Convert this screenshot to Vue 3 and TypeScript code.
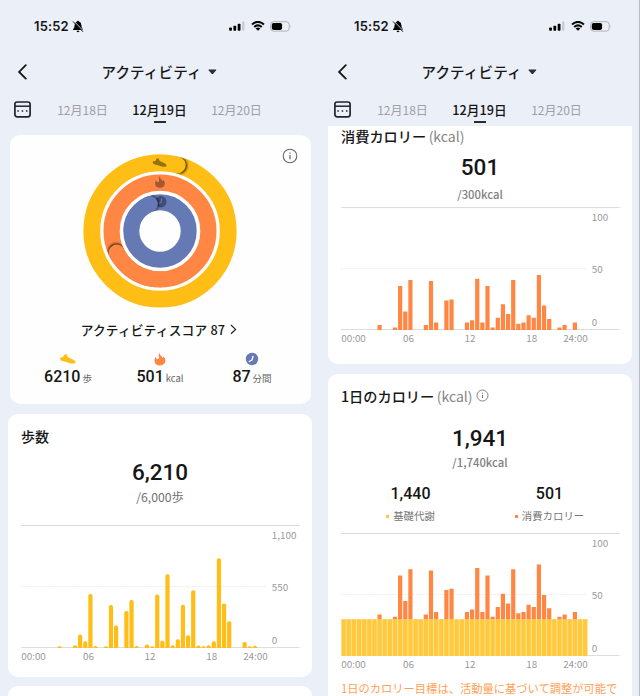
<script setup lang="ts">
import { defineComponent, h } from 'vue'

type Series = Record<number, number>

interface Bar { x: number; y: number; h: number; color: string; r: number }
interface Ring { id: string; r: number; w: number; color: string; end: number }

const SLOT = 5.14
const BASE = 122.9
const FULL = 122

const steps: Series = {
  7: 14, 10: 24, 11: 120, 12: 60, 13: 487, 14: 17, 16: 15, 17: 386, 18: 202, 20: 332, 21: 432,
  22: 17, 24: 30, 25: 15, 26: 482, 27: 64, 28: 664, 29: 24, 30: 78, 31: 388, 32: 115, 33: 520,
  34: 22, 35: 15, 36: 24, 37: 60, 38: 808, 39: 400, 40: 241, 43: 54, 44: 14, 45: 20,
}
const kcal: Series = {
  7: 4, 10: 2, 11: 36, 12: 15, 13: 41, 16: 4, 17: 40, 18: 6, 20: 24, 21: 25, 24: 6, 25: 8, 26: 42,
  27: 6, 28: 36, 29: 2, 30: 10, 31: 21, 32: 13, 33: 41, 34: 5, 35: 6, 36: 12, 37: 10, 38: 45,
  39: 20, 40: 9, 42: 2, 43: 4, 45: 6,
}

function toBars(data: Series, max: number, color: string, r: number, from = 0): Bar[] {
  return Object.entries(data).map(([slot, value]) => {
    const height = (value / max) * FULL
    return { x: 0.5 + Number(slot) * SLOT, y: BASE - from - height, h: height, color, r }
  })
}

const baseHeight = 0.3 * FULL
const baseBars: Bar[] = Array.from({ length: 48 }, (_, i) => ({
  x: 0.5 + i * SLOT, y: BASE - baseHeight, h: baseHeight, color: '#ffc93e', r: 0,
}))

const stepBars = toBars(steps, 1100, '#ffbd16', 1.8)
const kcalBars = toBars(kcal, 100, '#ff8743', 0)
const dayBars = [...baseBars, ...toBars(kcal, 100, '#ff8743', 0, baseHeight)]

const xTicks = [
  { x: 0.2, t: '00:00', a: 'start' }, { x: 67.6, t: '06', a: 'middle' },
  { x: 129.1, t: '12', a: 'middle' }, { x: 190.8, t: '18', a: 'middle' },
  { x: 246.8, t: '24:00', a: 'end' },
]

const BarChart = defineComponent({
  props: {
    bars: { type: Array as () => Bar[], required: true },
    labels: { type: Array as () => string[], required: true },
    filled: Boolean,
  },
  setup(p) {
    return () => h('svg', { class: 'chart', width: 279, height: 140, viewBox: '0 0 279 140' }, [
      h('rect', { x: 0, y: 0, width: 278.6, height: 1.1, fill: '#dcdcdc' }),
      h('line', { x1: 0, x2: 246, y1: 61.6, y2: 61.6, stroke: '#eeeeee', 'stroke-width': 1, 'stroke-dasharray': '2 1' }),
      h('rect', { x: 0, y: 122, width: 278.6, height: 1, fill: '#dddddd' }),
      p.filled ? h('rect', { x: 0.5, y: BASE - baseHeight, width: 246, height: baseHeight, fill: '#ffe39b' }) : null,
      ...p.bars.map(b => {
        const r = Math.min(b.r, b.h)
        return h('path', {
          fill: b.color,
          d: `M${b.x} ${b.y + b.h}V${b.y + r}q0 ${-r} ${r} ${-r}h${4.2 - 2 * r}q${r} 0 ${r} ${r}V${b.y + b.h}Z`,
        })
      }),
      ...p.labels.map((t, i) => h('text', { x: 250.8, y: [13.8, 66.3, 118.8][i] }, t)),
      ...xTicks.map(k => h('text', { x: k.x, y: 135, 'text-anchor': k.a }, k.t)),
    ])
  },
})

const rings: Ring[] = [
  { id: 'steps', r: 68.2, w: 16.8, color: '#ffbe16', end: 14.7 },
  { id: 'kcal', r: 48.4, w: 16.2, color: '#ff8743', end: 243.4 },
  { id: 'time', r: 28.7, w: 16, color: '#657ab5', end: 339.5 },
]

function point(r: number, deg: number): [number, number] {
  const a = (deg * Math.PI) / 180
  return [80 + r * Math.sin(a), 80 - r * Math.cos(a)]
}
function tail(ring: Ring): string {
  const [x1, y1] = point(ring.r, ring.end - 65)
  const [x2, y2] = point(ring.r, ring.end)
  return `M${x1} ${y1}A${ring.r} ${ring.r} 0 0 1 ${x2} ${y2}`
}

const shoe = 'M.7 3.1Q1.6 3.8 2.8 3.1Q4 2.3 4.2.8L6.4.2Q7 .3 7.1 1.2L7.6 3L13.9 6.1Q15.4 7 15.5 8.4Q15.5 9.5 14 9.5H11.2L1.1 6.6Q0 5.6.2 4.2Z'
const flame = 'M4.8 0Q5.2 2.1 7.5 4.1Q8 4.7 8 5.6Q8.9 5.3 9.1 4.1Q11.2 5.8 11.1 8.1Q10.8 12.8 5.6 13Q.6 12.8.2 8.4Q.1 6.3 1.3 4.6Q1.9 6.7 3.6 6.8Q5 6.7 4.6 4.2Q4.2 2 4.8 0Z'
const dates = ['12月18日', '12月19日', '12月20日']
</script>

<template>
  <main class="screens">
    <section v-for="side in ['left', 'right']" :key="side" class="phone" :class="side">
      <header class="top">
        <div class="status">
          <span class="time">15:52</span>
          <svg class="bell" width="12" height="13" viewBox="0 0 12 13">
            <path d="M6 .7Q7 .7 7 1.6Q9.4 2.3 9.4 5.4Q9.4 7.6 11 9.2V10H1V9.2Q2.6 7.6 2.6 5.4Q2.6 2.3 5 1.6Q5 .7 6 .7ZM4.5 10.8H7.5Q7.3 12.2 6 12.2T4.5 10.8Z" />
            <path d="M1.7 1L11.4 11" stroke="#ecf0f8" stroke-width="1" />
            <path d="M1 1.5L11 11.8" stroke="#111" stroke-width="1" />
          </svg>
          <svg class="signal" width="16" height="10" viewBox="0 0 16 10">
            <rect x=".2" y="6.5" width="2.7" height="3.3" rx=".7" />
            <rect x="4.4" y="4.8" width="2.8" height="5" rx=".7" />
            <rect x="8.7" y="2.7" width="2.8" height="7.1" rx=".7" />
            <rect x="13" y=".4" width="2.5" height="9.4" rx=".7" fill="#c9ccd2" />
          </svg>
          <svg class="wifi" width="14" height="10" viewBox="0 0 14 10" fill="none" stroke="#080808" stroke-width="2">
            <path d="M1 3.4Q7-1.6 13 3.4M3.2 5.9Q7 2.8 10.8 5.9" />
            <path d="M4.6 7.5Q7 5.7 9.4 7.5L7 9.8Z" fill="#080808" stroke="none" />
          </svg>
          <svg class="battery" width="22" height="11" viewBox="0 0 22 11">
            <rect x=".6" y=".7" width="18.6" height="9.4" rx="3" fill="none" stroke="#a9acb2" stroke-width=".9" />
            <rect x="1.8" y="1.9" width="10.3" height="7" rx="1.8" />
            <path d="M20.5 3.8Q22 5.4 20.5 7Z" fill="#a9acb2" />
          </svg>
        </div>
        <div class="nav">
          <svg class="back" width="10" height="16" viewBox="0 0 10 16" fill="none" stroke="#151515" stroke-width="1.8" stroke-linecap="round">
            <path d="M8.8 1.2L2.1 7.9L8.8 14.6" />
          </svg>
          <h1>アクティビティ</h1>
          <svg class="caret" width="9" height="6" viewBox="0 0 9 6"><path d="M1.1.4H7.7Q8.7.5 8.1 1.3L5.2 4.7Q4.4 5.5 3.6 4.7L.7 1.3Q.1.5 1.1.4Z" fill="#2b2d3b" /></svg>
        </div>
        <div class="days">
          <svg class="calendar" width="18" height="18" viewBox="0 0 18 18" fill="none" stroke="#20242c">
            <rect x=".9" y="1" width="15.2" height="14.8" rx="2.3" stroke-width="1.7" />
            <path d="M1 5.2H16" stroke-width="1.5" />
            <path d="M3.4 10H4.9M7.7 10H9.2M12 10H13.5" stroke-width="1.5" />
          </svg>
          <span v-for="(d, i) in dates" :key="d" class="day" :class="{ current: i === 1 }">{{ d }}</span>
        </div>
      </header>

      <div v-if="side === 'left'" class="body">
        <article class="card score">
          <svg class="info big" width="16" height="16" viewBox="0 0 16 16" fill="none" stroke="#666">
            <circle cx="8" cy="8" r="6.8" stroke-width="1.1" /><path d="M8 7V11.2M8 4.5V5.7" stroke-width="1.2" />
          </svg>
          <svg class="rings" width="160" height="160" viewBox="0 0 160 160">
            <defs>
              <filter id="soft" x="-50%" y="-50%" width="200%" height="200%"><feGaussianBlur stdDeviation="1.1" /></filter>
              <mask v-for="r in rings" :id="'m-' + r.id" :key="r.id" maskUnits="userSpaceOnUse" x="0" y="0" width="160" height="160">
                <circle cx="80" cy="80" :r="r.r" :stroke-width="r.w" fill="none" stroke="#fff" />
              </mask>
            </defs>
            <circle v-for="r in rings" :key="r.id" cx="80" cy="80" :r="r.r" :stroke-width="r.w" :stroke="r.color" fill="none" />
            <path :d="flame" transform="translate(74.9 25.1) scale(.9)" fill="#a5582d" />
            <circle cx="80.8" cy="50.7" r="5.7" fill="#3f4d76" />
            <path d="M81.6 47.4L81.2 51.2L78.6 52.8" fill="none" stroke="#657ab5" stroke-width="1.2" />
            <g v-for="r in rings" :key="'t' + r.id" :mask="`url(#m-${r.id})`">
              <circle :cx="point(r.r, r.end + 1.2)[0]" :cy="point(r.r, r.end + 1.2)[1]" :r="r.w / 2 + .3" fill="#000" fill-opacity=".7" filter="url(#soft)" />
              <path :d="tail(r)" :stroke="r.color" :stroke-width="r.w" stroke-linecap="round" fill="none" />
            </g>
            <path :d="shoe" transform="translate(72.6 7.1) scale(.9)" fill="#96720f" />
          </svg>
          <div class="score-line">
            アクティビティスコア 87
            <svg width="7" height="11" viewBox="0 0 7 11" fill="none" stroke="#222" stroke-width="1.2"><path d="M1 1L5.6 5.4L1 9.8" /></svg>
          </div>
          <div class="metrics">
            <div class="metric">
              <svg width="16" height="14" viewBox="0 0 16 14"><path :d="shoe" transform="translate(0 2)" fill="#ffbe16" /></svg>
              <p><b>6210</b><small>歩</small></p>
            </div>
            <div class="metric">
              <svg width="12" height="14" viewBox="0 0 12 14"><path :d="flame" transform="translate(.3 .5)" fill="#ff8743" /></svg>
              <p><b>501</b><small>kcal</small></p>
            </div>
            <div class="metric">
              <svg width="14" height="14" viewBox="0 0 14 14"><circle cx="7" cy="7" r="6.2" fill="#657ab5" /><path d="M8 3.8L7.2 7.9L3.8 9.8" fill="none" stroke="#fff" stroke-width="1.3" /></svg>
              <p><b>87</b><small>分間</small></p>
            </div>
          </div>
        </article>
        <article class="card steps">
          <h2>歩数</h2>
          <p class="total">6,210</p>
          <p class="goal regular">/6,000歩</p>
          <BarChart :bars="stepBars" :labels="['1,100', '550', '0']" />
        </article>
        <article class="card next"></article>
      </div>

      <div v-else class="body">
        <article class="card burned">
          <h2>消費カロリー<span>(kcal)</span></h2>
          <p class="total">501</p>
          <p class="goal">/300kcal</p>
          <BarChart :bars="kcalBars" :labels="['100', '50', '0']" />
        </article>
        <article class="card daily">
          <h2>1日のカロリー<span>(kcal)</span>
            <svg class="info" width="13" height="13" viewBox="0 0 13 13" fill="none" stroke="#777">
              <circle cx="6.5" cy="6.5" r="5.5" stroke-width=".9" /><path d="M6.5 5.7V9M6.5 3.7V4.7" />
            </svg>
          </h2>
          <p class="total">1,941</p>
          <p class="goal">/1,740kcal</p>
          <div class="split">
            <div><b>1,440</b><p class="legend base">基礎代謝</p></div>
            <div><b>501</b><p class="legend active">消費カロリー</p></div>
          </div>
          <BarChart :bars="dayBars" :labels="['100', '50', '0']" filled />
          <p class="note">1日のカロリー目標は、活動量に基づいて調整が可能で</p>
        </article>
      </div>
    </section>
  </main>
</template>

<style>
body { margin: 0; overflow: hidden; }
</style>

<style scoped>
* { box-sizing: border-box; }
h1, h2, p { margin: 0; }
svg { display: block; flex: none; }
.screens {
  display: flex; width: 640px; height: 696px; overflow: hidden; color: #161616;
  font-family: "Noto Sans CJK JP", "Noto Sans", sans-serif;
}
.phone { width: 320px; height: 696px; overflow: hidden; background: #ebeff8; display: flex; flex-direction: column; }
.right { background: #ebf0f8; border-right: 1px solid #b9bcc2; }
.top { height: 126px; flex: none; width: 320px; }
.status { display: flex; align-items: center; height: 20px; margin-top: 16px; padding-left: 34px; }
.time { font: 600 13px/20px Inter, sans-serif; width: 38px; letter-spacing: .15px; }
.signal { margin-left: 145px; }
.wifi { margin-left: 6px; }
.battery { margin-left: 5px; }
.nav { display: flex; align-items: center; height: 24px; margin-top: 24px; padding-left: 17px; }
.nav h1 { font-size: 14.5px; font-weight: 500; line-height: 24px; margin-left: 74.5px; width: 102.5px; white-space: nowrap; letter-spacing: .15px; }
.caret { margin-left: 4px; }
.days { display: flex; height: 42px; padding: 17px 0 0 14px; }
.day { font-size: 12px; line-height: 18px; color: #9da0a5; white-space: nowrap; display: flex; flex-direction: column; align-items: center; width: 77px; }
.calendar { margin-right: 12px; }
.day.current { font-weight: 500; font-size: 12.7px; color: #151515; }
.day.current::after { content: ""; width: 12px; height: 1.5px; margin-top: 2px; background: #2b2b2b; }
.body { flex: 1; min-height: 0; overflow: hidden; width: 320px; }
.card { background: #fff; border-radius: 10px; margin: 0 8px; padding: 0 13px; overflow: hidden; }
.score { height: 269px; margin: 9px 9.5px 0; padding: 0; position: relative; background: #fefefe; }
.info.big { position: absolute; right: 13px; top: 13px; }
.rings { margin: 16px auto 0; }
.score-line { display: flex; justify-content: center; align-items: center; gap: 5px; height: 20px; margin-top: 8px; padding-right: 2px; font-size: 12.7px; font-weight: 500; white-space: nowrap; letter-spacing: .2px; }
.metrics { display: grid; grid-template-columns: repeat(3, 92px); justify-content: center; margin-top: 13px; }
.metric { display: flex; flex-direction: column; align-items: center; }
.metric p { display: flex; align-items: baseline; gap: 2px; line-height: 20px; height: 20px; margin-top: 1px; }
.metric b { font: 500 16px/20px Roboto, sans-serif; }
.metric small { font-size: 9.5px; line-height: 20px; color: #666; }
.steps { height: 263px; margin-top: 10px; }
.next { height: 40px; margin-top: 9px; }
h2 { font-size: 14px; font-weight: 500; line-height: 20px; display: flex; align-items: center; white-space: nowrap; }
h2 span { font-weight: 400; font-size: 14px; color: #858585; margin-left: 2.5px; }
h2 .info { margin: -2px 0 0 4px; }
.total { font: 500 22.5px/26px Roboto, sans-serif; text-align: center; }
.goal { font-size: 11.3px; font-weight: 500; line-height: 16px; color: #808080; text-align: center; }
.goal.regular { font-size: 12.2px; font-weight: 400; color: #707070; }
:deep(.chart) { display: block; }
:deep(.chart text) { font-size: 9.9px; fill: #999; }
.steps h2 { padding-top: 12px; }
.steps .total { margin-top: 13px; }
.steps .goal { margin-top: 4px; }
.steps :deep(.chart) { margin-top: 20px; }
.burned { height: 238px; border-radius: 0 0 10px 10px; }
.burned .total { margin-top: 8px; }
.burned .goal { margin-top: 6px; }
.burned h2 { font-size: 14.2px; }
.burned :deep(.chart) { margin-top: 5px; }
.daily { margin-top: 10px; height: 400px; }
.daily h2 { padding-top: 12px; font-size: 14.2px; }
.daily .total { margin-top: 19px; }
.daily .goal { margin-top: 3px; }
.split { display: grid; grid-template-columns: 1fr 1fr; text-align: center; margin-top: 14px; }
.split b { font: 500 16px/20px Roboto, sans-serif; display: block; }
.legend { display: flex; justify-content: center; align-items: center; gap: 4px; font-size: 10.4px; line-height: 16px; color: #777; margin-top: 4px; }
.legend::before { content: ""; width: 3px; height: 3px; background: #ffc83d; }
.legend.active::before { background: #ff8743; }
.daily :deep(.chart) { margin-top: 9px; }
.note { font-size: 11.28px; line-height: 16px; margin-top: 7px; white-space: nowrap; color: #ff9f57; }
</style>
